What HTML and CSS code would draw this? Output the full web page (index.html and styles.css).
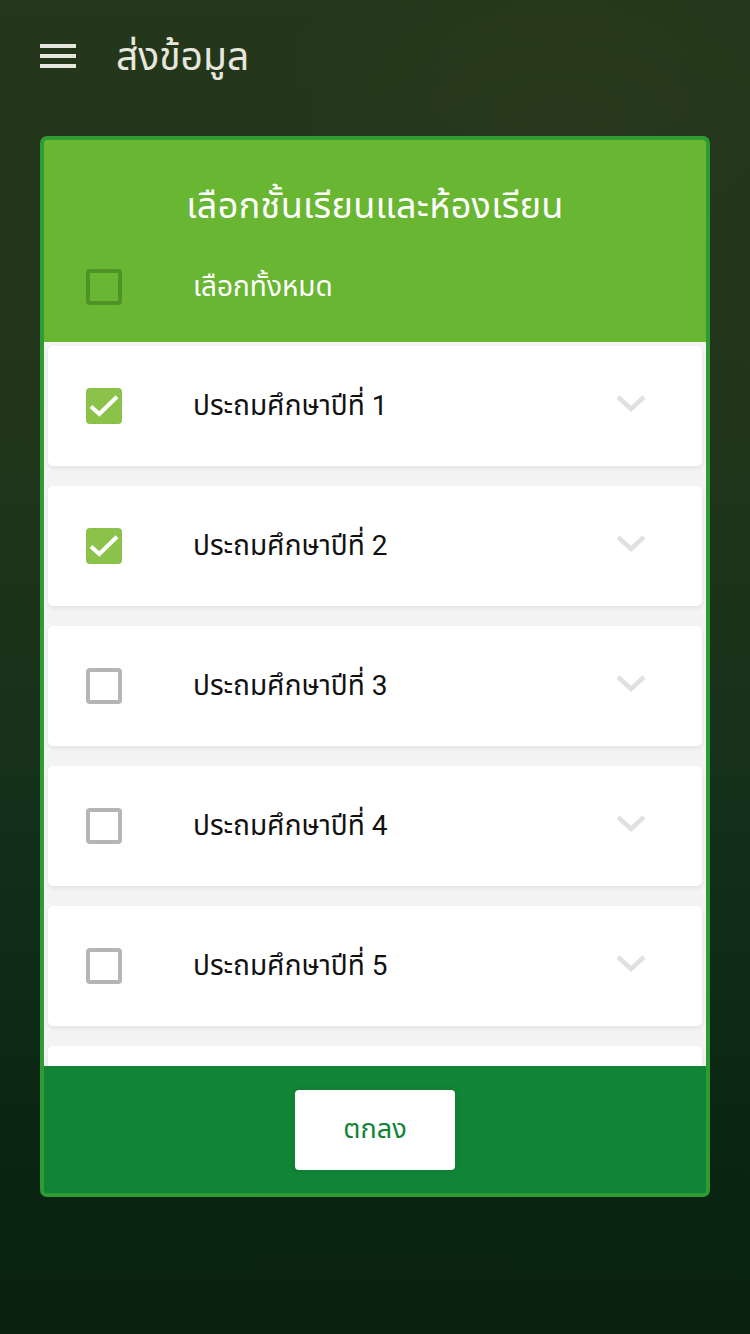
FILE: index.html
```html
<!DOCTYPE html>
<html lang="th">
<head>
<meta charset="utf-8">
<title>ส่งข้อมูล</title>
<link rel="stylesheet" href="styles.css">
</head>
<body>
<div class="screen">
  <header class="topbar">
    <svg class="menu-icon" width="36" height="24" viewBox="0 0 36 24" aria-hidden="true">
      <rect x="0" y="0" width="36" height="4" fill="#e6e6de"/>
      <rect x="0" y="10" width="36" height="4" fill="#e6e6de"/>
      <rect x="0" y="20" width="36" height="4" fill="#e6e6de"/>
    </svg>
    <h1 class="topbar-title">ส่งข้อมูล</h1>
  </header>

  <section class="dialog">
    <div class="dialog-head">
      <h2 class="dialog-title">เลือกชั้นเรียนและห้องเรียน</h2>
      <div class="row select-all">
        <span class="box box-head"></span>
        <span class="row-label">เลือกทั้งหมด</span>
      </div>
    </div>

    <div class="dialog-list">
      <div class="item">
        <span class="box box-checked"><svg width="36" height="36" viewBox="0 0 36 36"><polyline points="5,18.5 13.3,26 31,8.8" fill="none" stroke="#fff" stroke-width="4"/></svg></span>
        <span class="item-label">ประถมศึกษาปีที่ 1</span>
        <svg class="chev" width="34" height="22" viewBox="0 0 34 22"><polyline points="3,4 16,16 29,4" fill="none" stroke="#e0e0e0" stroke-width="4.5"/></svg>
      </div>
      <div class="item">
        <span class="box box-checked"><svg width="36" height="36" viewBox="0 0 36 36"><polyline points="5,18.5 13.3,26 31,8.8" fill="none" stroke="#fff" stroke-width="4"/></svg></span>
        <span class="item-label">ประถมศึกษาปีที่ 2</span>
        <svg class="chev" width="34" height="22" viewBox="0 0 34 22"><polyline points="3,4 16,16 29,4" fill="none" stroke="#e0e0e0" stroke-width="4.5"/></svg>
      </div>
      <div class="item">
        <span class="box box-empty"></span>
        <span class="item-label">ประถมศึกษาปีที่ 3</span>
        <svg class="chev" width="34" height="22" viewBox="0 0 34 22"><polyline points="3,4 16,16 29,4" fill="none" stroke="#e0e0e0" stroke-width="4.5"/></svg>
      </div>
      <div class="item">
        <span class="box box-empty"></span>
        <span class="item-label">ประถมศึกษาปีที่ 4</span>
        <svg class="chev" width="34" height="22" viewBox="0 0 34 22"><polyline points="3,4 16,16 29,4" fill="none" stroke="#e0e0e0" stroke-width="4.5"/></svg>
      </div>
      <div class="item">
        <span class="box box-empty"></span>
        <span class="item-label">ประถมศึกษาปีที่ 5</span>
        <svg class="chev" width="34" height="22" viewBox="0 0 34 22"><polyline points="3,4 16,16 29,4" fill="none" stroke="#e0e0e0" stroke-width="4.5"/></svg>
      </div>
      <div class="item item-partial"></div>
    </div>

    <div class="dialog-foot">
      <div class="ok-btn" role="button"><span class="ok-text">ตกลง</span></div>
    </div>
  </section>
</div>
</body>
</html>
```

FILE: styles.css
```css
html, body {
  margin: 0;
  padding: 0;
}

body {
  width: 750px;
  height: 1334px;
  overflow: hidden;
  font-family: Roboto, "Noto Sans Thai", "Noto Sans", sans-serif;
  background: #0c2612;
}

.screen {
  width: 750px;
  height: 1334px;
  display: flex;
  flex-direction: column;
  background:
    radial-gradient(ellipse 420px 260px at 560px 110px, rgba(50, 62, 34, 0.3), rgba(0, 0, 0, 0) 70%),
    linear-gradient(180deg, #25371a 0%, #22351a 30%, #15301a 60%, #0a2511 85%, #08220f 100%);
}

.topbar {
  height: 112px;
  display: flex;
  align-items: center;
  padding-left: 40px;
  box-sizing: border-box;
}

.menu-icon {
  display: block;
  flex: none;
}

.topbar-title {
  margin: 0 0 0 40px;
  font-size: 39px;
  font-weight: 400;
  color: #e6e6de;
  line-height: 1;
  position: relative;
  top: 1px;
}

.dialog {
  margin: 24px 40px 0;
  height: 1061px;
  border: 4px solid #2f9b34;
  border-radius: 7px;
  box-sizing: border-box;
  display: flex;
  flex-direction: column;
  overflow: hidden;
  background: #118435;
}

.dialog-head {
  height: 202px;
  flex: none;
  background: #69b632;
  display: flex;
  flex-direction: column;
}

.dialog-title {
  margin: 0;
  height: 132px;
  display: flex;
  align-items: center;
  justify-content: center;
  padding-top: 2px;
  box-sizing: border-box;
  font-size: 36px;
  font-weight: 400;
  color: #ffffff;
  letter-spacing: 0.3px;
}

.row {
  display: flex;
  align-items: center;
}

.select-all {
  height: 30px;
  padding-left: 42px;
}

.row-label {
  margin-left: 71px;
  font-size: 28px;
  color: #ffffff;
}

.box {
  width: 36px;
  height: 36px;
  flex: none;
  box-sizing: border-box;
  border-radius: 4px;
  display: block;
}

.box svg {
  display: block;
}

.box-head {
  border: 4px solid #4f9226;
}

.box-checked {
  background: #8bc34a;
}

.box-empty {
  border: 4px solid #b5b5b5;
}

.dialog-list {
  height: 724px;
  flex: none;
  background: #f4f4f4;
  padding: 4px 4px 0;
  box-sizing: border-box;
  overflow: hidden;
  display: flex;
  flex-direction: column;
  gap: 20px;
}

.item {
  height: 120px;
  flex: none;
  background: #ffffff;
  border-radius: 5px;
  box-shadow: 0 2px 5px rgba(0, 0, 0, 0.08);
  display: flex;
  align-items: center;
  padding-left: 38px;
}

.item-label {
  margin-left: 71px;
  font-size: 28px;
  color: #111111;
  flex: 1;
}

.chev {
  display: block;
  flex: none;
  margin-right: 53px;
  margin-top: -4px;
}

.dialog-foot {
  flex: 1;
  display: flex;
  justify-content: center;
  align-items: flex-start;
  padding-top: 24px;
  box-sizing: border-box;
  background: #118435;
}

.ok-btn {
  width: 160px;
  height: 80px;
  border-radius: 4px;
  background: #ffffff;
  display: flex;
  align-items: center;
  justify-content: center;
  box-shadow: 0 0 6px rgba(0, 0, 0, 0.08);
}

.ok-text {
  color: #118435;
  font-size: 27px;
  line-height: 1.3;
}
```
